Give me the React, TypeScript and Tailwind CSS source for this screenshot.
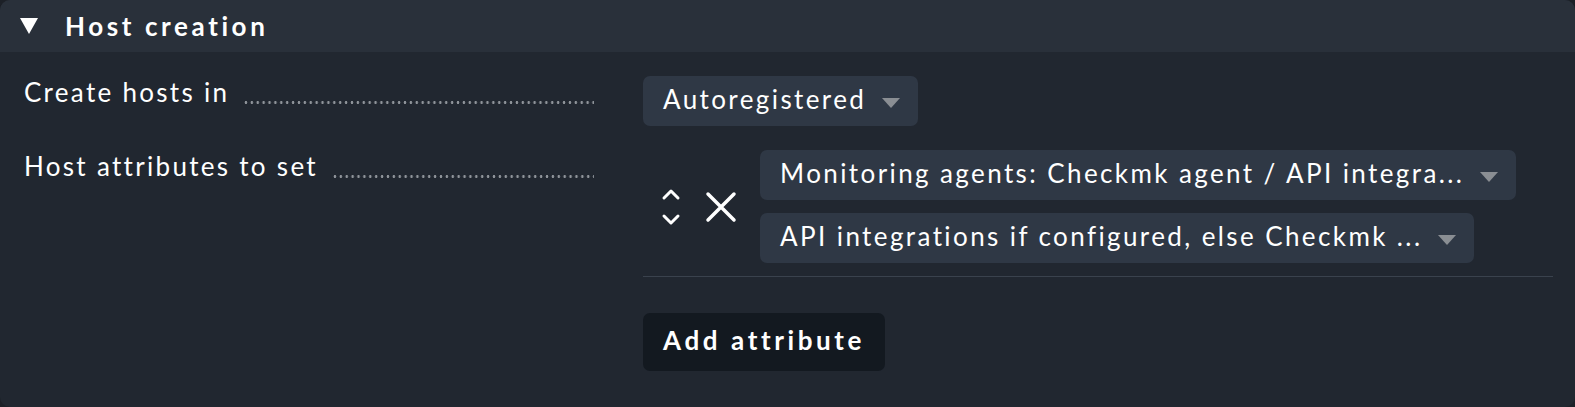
import React from 'react';

const Caret: React.FC = () => (
  <span className="ml-4 mt-1 inline-block h-0 w-0 border-x-[9px] border-t-[10px] border-x-transparent border-t-[#8a8e93]" />
);

const Select: React.FC<{ label: string; className?: string }> = ({ label, className = '' }) => (
  <div className={`flex h-[50px] items-center rounded-[7px] bg-[#2f3845] pl-5 pr-[18px] ${className}`}>
    <span className="whitespace-nowrap pb-[3px] tracking-[2.4px]">{label}</span>
    <Caret />
  </div>
);

const Label: React.FC<{ text: string }> = ({ text }) => (
  <div className="flex w-[570px] items-end">
    <span className="whitespace-nowrap tracking-[2.3px]">{text}</span>
    <span className="mb-[8px] ml-[14px] h-[3px] flex-1 bg-[radial-gradient(circle,#8f949a_1.1px,transparent_1.6px)] bg-[length:5.9px_3px] bg-repeat-x" />
  </div>
);

export default function App() {
  return (
    <div className="min-h-[407px] bg-[#1c2027] font-['Lato',sans-serif] text-[26px] text-white">
      <div className="h-[407px] overflow-hidden rounded-[10px] bg-[#212730]">
        {/* header */}
        <div className="flex h-[52px] items-center bg-[#29303a]">
          <span className="ml-5 inline-block h-0 w-0 border-x-[9px] border-t-[16px] border-x-transparent border-t-white" />
          <span className="ml-[27px] text-[26px] font-bold tracking-[3.6px]">Host creation</span>
        </div>

        {/* row 1 */}
        <div className="flex pt-6 pl-6">
          <div className="-mt-[3px]">
            <Label text="Create hosts in" />
          </div>
          <div className="ml-[49px]">
            <Select label="Autoregistered" />
          </div>
        </div>

        {/* row 2 */}
        <div className="mt-6 flex pl-6">
          <div className="-mt-[3px]">
            <Label text="Host attributes to set" />
          </div>
          <div className="ml-[49px] w-[910px]">
            <div className="flex items-center border-b border-[#3a424d] pb-[13px]">
              <div className="flex w-[117px] items-center pl-[17px]">
                <svg width="22" height="38" viewBox="0 0 22 38" fill="none" stroke="white" strokeWidth="3" strokeLinecap="round" strokeLinejoin="round">
                  <path d="M4 10 L11 3 L18 10" />
                  <path d="M4 28 L11 35 L18 28" />
                </svg>
                <svg className="ml-[23px]" width="32" height="32" viewBox="0 0 32 32" fill="none" stroke="white" strokeWidth="3.5" strokeLinecap="round">
                  <path d="M3 3 L29 29 M29 3 L3 29" />
                </svg>
              </div>
              <div className="flex flex-col gap-[13px]">
                <Select label="Monitoring agents: Checkmk agent / API integra..." />
                <Select className="w-fit" label="API integrations if configured, else Checkmk ..." />
              </div>
            </div>
            <button className="mt-9 flex h-[58px] items-center rounded-[7px] bg-[#131920] px-5 pb-[3px] font-bold tracking-[3.6px] text-white">
              Add attribute
            </button>
          </div>
        </div>
      </div>
    </div>
  );
}
